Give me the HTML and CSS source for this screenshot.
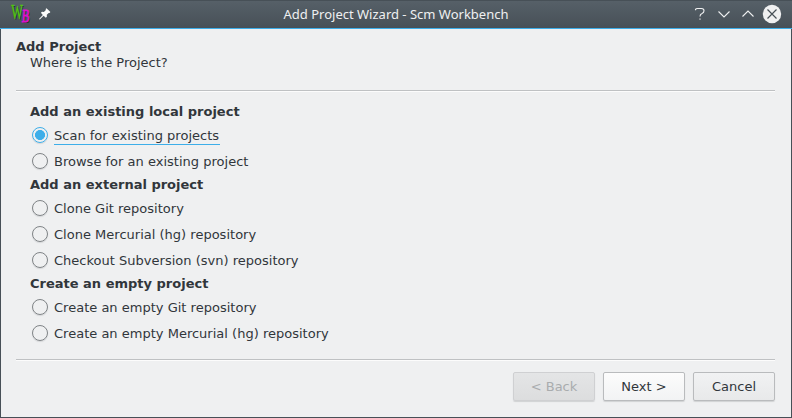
FILE: index.html
```html
<!DOCTYPE html>
<html lang="en">
<head>
<meta charset="utf-8">
<title>Add Project Wizard</title>
<link rel="stylesheet" href="styles.css">
</head>
<body>
<div class="window">
  <header class="titlebar">
    <div class="left">
      <svg class="logo" width="20" height="20" viewBox="0 0 20 20">
        <g class="logo-shadow">
          <text transform="translate(2.2 15.9) scale(.56 1)" font-size="22">W</text>
          <text transform="translate(12.4 18.9) skewX(-4) scale(.62 1)" font-size="18.5">B</text>
        </g>
        <text class="logo-w" transform="translate(1.2 15.4) scale(.56 1)" font-size="22">W</text>
        <text class="logo-b" transform="translate(11.4 18.3) skewX(-4) scale(.62 1)" font-size="18.5">B</text>
      </svg>
      <svg class="pin" width="12" height="12" viewBox="0 0 12 12">
        <path d="M7.5 0.3L11.4 4L10.5 5.1L9.7 4.9L7.8 6.8L7.9 8.7L6.8 9.8L4.6 7.8L.8 11.6L0 11L3.8 7L1.9 4.8L3 3.7L4.9 3.9L6.9 2L6.7 1.1Z"/>
      </svg>
    </div>
    <div class="caption">Add Project Wizard - Scm Workbench</div>
    <svg class="controls" width="92" height="20" viewBox="0 0 92 20">
      <path d="M5.5 6.2V5.5Q5.9 4.5 7.5 4.5H11.5Q14 4.5 14 6.8Q14 8.6 12 9.5Q10 10.3 10 12.5"/>
      <path class="dot" d="M10 14.2V16"/>
      <path d="M28.5 7.5L34 13L39.5 7.5M52.5 12.5L58 7L63.5 12.5"/>
      <circle cx="82" cy="10" r="9.2"/>
      <path class="cross" d="M77.5 5.5L86.5 14.5M86.5 5.5L77.5 14.5"/>
    </svg>
  </header>
  <main class="content">
    <div class="intro">
      <h1>Add Project</h1>
      <p>Where is the Project?</p>
    </div>
    <div class="rule"></div>
    <form class="options">
      <h2>Add an existing local project</h2>
      <label><input type="radio" name="source" checked><span>Scan for existing projects</span></label>
      <label><input type="radio" name="source"><span>Browse for an existing project</span></label>
      <h2>Add an external project</h2>
      <label><input type="radio" name="source"><span>Clone Git repository</span></label>
      <label><input type="radio" name="source"><span>Clone Mercurial (hg) repository</span></label>
      <label><input type="radio" name="source"><span>Checkout Subversion (svn) repository</span></label>
      <h2>Create an empty project</h2>
      <label><input type="radio" name="source"><span>Create an empty Git repository</span></label>
      <label><input type="radio" name="source"><span>Create an empty Mercurial (hg) repository</span></label>
    </form>
    <div class="rule"></div>
    <footer class="actions">
      <button disabled>&lt; Back</button>
      <button class="primary">Next &gt;</button>
      <button>Cancel</button>
    </footer>
  </main>
</div>
</body>
</html>
```
FILE: styles.css
```css
* { box-sizing: border-box; }

body { margin: 0; }

.window {
  width: 792px;
  height: 418px;
  display: flex;
  flex-direction: column;
  background: #eff0f1;
  border: 1px solid #475057;
  border-top: 0;
  color: #31363b;
  font: 13px/16px "DejaVu Sans", sans-serif;
}

.titlebar {
  height: 29px;
  flex: none;
  margin: 0 -1px;
  padding: 0 10px;
  display: grid;
  grid-template-columns: 92px 1fr 92px;
  align-items: center;
  border-bottom: 1px solid #3daee9;
  background: linear-gradient(#475057 0 1px, #566068 1px, #475057 28px);
}

.left { display: flex; align-items: center; gap: 9px; }
.logo { overflow: visible; font-family: "Liberation Serif", serif; }
.logo-shadow { fill: #252b2e; }
.logo-w { fill: #4fc612; stroke: #4fc612; stroke-width: .5; }
.logo-b { fill: #dc10cc; stroke: #dc10cc; stroke-width: 1; }
.pin { fill: #fcfcfc; }

.caption {
  text-align: center;
  color: #eff0f1;
  font: 13px/20px "Noto Sans", sans-serif;
}

.controls { fill: none; stroke: #eff0f1; stroke-width: 1.1; }
.controls .dot { stroke-width: 1.3; opacity: .6; }
.controls circle { fill: #eff0f1; stroke: none; }
.controls .cross { stroke: #475057; stroke-width: 1.2; }

.content { padding: 10px 16px 0 15px; }
.intro { height: 51px; }
h1, h2, p { margin: 0; font-size: 13px; }
h1 { line-height: 16px; }
p { padding-left: 14px; }

.rule {
  height: 2px;
  background: #fcfcfc;
  border-top: 1px solid #bfc1c3;
}

.options { height: 267px; padding: 9px 0 0 14px; }
h2 { height: 21px; line-height: 21px; }

label { height: 26px; padding-left: 2px; display: flex; align-items: center; gap: 6px; }
label span { height: 18px; line-height: 16px; padding: 2px 1px 0 0; letter-spacing: .01px; }

input {
  appearance: none;
  width: 16px;
  height: 16px;
  margin: 0;
  border: 1px solid #7f8386;
  border-radius: 50%;
  box-shadow: 0 1px 1px #d3d5d7;
}

input:checked {
  border-color: #3daee9;
  background: radial-gradient(circle, #3daee9 4.7px, transparent 5.3px);
}

input:checked + span { box-shadow: 0 1px #3daee9; }

.actions { display: flex; justify-content: flex-end; gap: 8px; padding-top: 11px; }

button {
  width: 82px;
  height: 29px;
  padding: 0;
  border: 1px solid #b9bbbd;
  border-radius: 2px;
  background: linear-gradient(#f1f2f3, #e8e9ea);
  box-shadow: 0 1px 1px #d0d2d3;
  color: #31363b;
  font: 13px/16px "DejaVu Sans", sans-serif;
}

.primary { background: linear-gradient(#fcfcfc, #f2f3f4); }

button:disabled {
  border-color: #cfd0d2;
  background: linear-gradient(#e4e5e6, #dcddde);
  color: #a9acae;
}
```
